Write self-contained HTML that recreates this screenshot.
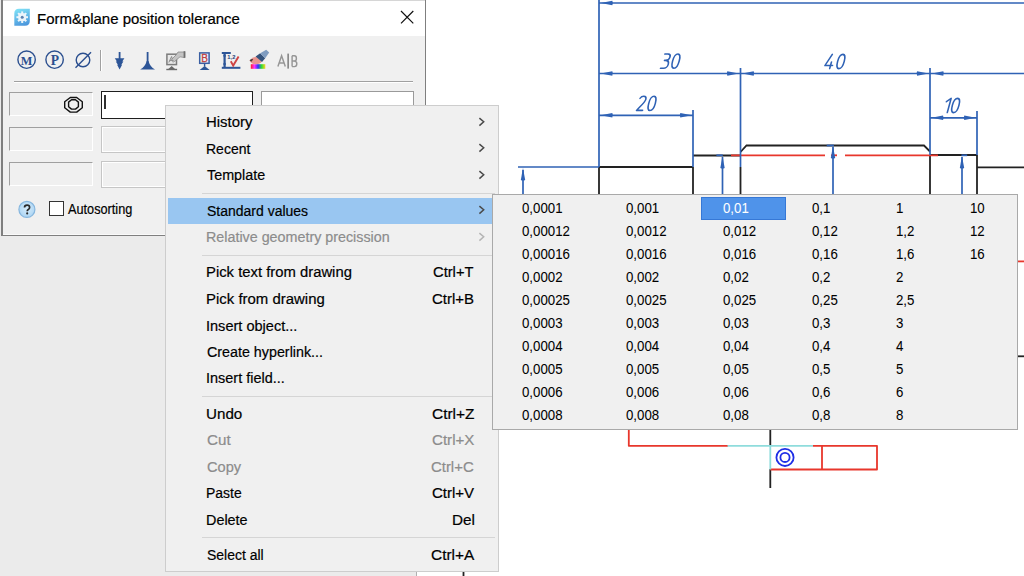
<!DOCTYPE html>
<html><head><meta charset="utf-8">
<style>
html,body{margin:0;padding:0;}
body{width:1024px;height:576px;position:relative;overflow:hidden;background:#fff;font-family:"Liberation Sans",sans-serif;}
.a{position:absolute;}
.t{position:absolute;white-space:nowrap;line-height:1;-webkit-text-stroke:0.2px currentColor;}
</style></head>
<body>
<div class="a" style="left:0;top:0;width:417px;height:576px;background:#ebebeb"></div>
<div class="a" style="left:416px;top:0;width:1px;height:576px;background:#b0b0b0"></div>
<svg class="a" style="left:0;top:0" width="1024" height="576" viewBox="0 0 1024 576">
<g stroke="#222" stroke-width="1.8" fill="none">
<path d="M599 167 H693"/>
<path d="M599 167 V194"/>
<path d="M693 167 V194"/>
<path d="M693 155.5 H740"/>
<path d="M740.5 167 V194"/>
<path d="M740.5 152 L746.5 145.5 H924 L930 151.5"/>
<path d="M930 155 H977"/>
<path d="M930 155 V194"/>
<path d="M977 155 V194"/>
<path d="M977 167.3 H1024"/>
<path d="M1018 356.3 H1024"/>
<path d="M770.3 430 V446"/>
<path d="M770.3 469 V488"/>
<path d="M463.5 500 V576"/>
</g>
<g stroke="#e8372c" stroke-width="1.8" fill="none" stroke-linejoin="round">
<path d="M731 155.3 H825"/>
<path d="M831 155.3 H837"/>
<path d="M845 155.3 H938"/>
<path d="M1018 261.4 H1024"/>
<path d="M628.8 430 V445.8 H728"/>
<path d="M813 445.8 H877 V469.5 H770.3"/>
<path d="M822 445.8 V469.5"/>
</g>
<g stroke="#8fdcdc" stroke-width="1.8" fill="none"><path d="M727.5 445.8 H813"/><path d="M770.3 445.8 V469.5"/></g>
<g stroke="#1f2fe6" stroke-width="1.8" fill="none"><circle cx="785" cy="457.4" r="8.6"/><circle cx="785" cy="457.4" r="4.6"/></g>
<g stroke="#2f62b5" stroke-width="1.8"><path d="M716.4 155.3 H722.8"/><path d="M826.7 145.5 H833.9"/><path d="M961.4 155.3 H967.2"/></g>
<g stroke="#2f62b5" stroke-width="1.7" fill="none">
<line x1="599" y1="0" x2="599" y2="167"/>
<line x1="599" y1="3" x2="1024" y2="3"/>
<line x1="599" y1="73.5" x2="1024" y2="73.5"/>
<line x1="740.5" y1="68" x2="740.5" y2="167"/>
<line x1="930" y1="68" x2="930" y2="155"/>
<line x1="599" y1="115.3" x2="693" y2="115.3"/>
<line x1="693" y1="110" x2="693" y2="167"/>
<line x1="930" y1="117.8" x2="977" y2="117.8"/>
<line x1="977" y1="111" x2="977" y2="155"/>
<line x1="518" y1="167" x2="599" y2="167"/>
<line x1="523" y1="170" x2="523" y2="194"/>
<line x1="722.5" y1="157" x2="722.5" y2="194"/>
<line x1="833" y1="147" x2="833" y2="194"/>
<line x1="962" y1="157" x2="962" y2="194"/>
</g>
<g fill="#2f62b5">
<path d="M600.8 3 L612.3 0.7999999999999998 Q613.4 3 612.3 5.2 Z"/>
<path d="M600.8 73.5 L612.3 71.3 Q613.4 73.5 612.3 75.7 Z"/>
<path d="M738.8 73.5 L727.3 71.3 Q726.1999999999999 73.5 727.3 75.7 Z"/>
<path d="M742.2 73.5 L753.7 71.3 Q754.8000000000001 73.5 753.7 75.7 Z"/>
<path d="M928.6 73.5 L917.1 71.3 Q916.0 73.5 917.1 75.7 Z"/>
<path d="M931.8 73.5 L943.3 71.3 Q944.4 73.5 943.3 75.7 Z"/>
<path d="M600.8 115.3 L612.3 113.1 Q613.4 115.3 612.3 117.5 Z"/>
<path d="M691.8 115.3 L680.3 113.1 Q679.1999999999999 115.3 680.3 117.5 Z"/>
<path d="M931.5 117.8 L943.0 115.6 Q944.1 117.8 943.0 120.0 Z"/>
<path d="M975.8 117.8 L964.3 115.6 Q963.1999999999999 117.8 964.3 120.0 Z"/>
<path d="M523 168 L520.8 180 Q523 181.1 525.2 180 Z"/>
<path d="M722.5 156 L720.3 168 Q722.5 169.1 724.7 168 Z"/>
<path d="M833 146 L830.8 158 Q833 159.1 835.2 158 Z"/>
<path d="M962 156 L959.8 168 Q962 169.1 964.2 168 Z"/>
</g>
<g stroke="#2f62b5" stroke-width="1.6" fill="none" stroke-linecap="round" stroke-linejoin="round">
<path transform="translate(660.20 68.60) skewX(-15)" d="M0.7,-14.6 H3.9 C5.7,-14.6 6.7,-13.4 6.7,-11.6 C6.7,-9.6 5.3,-8.2 3.1,-8.2 H2.1 M3.1,-8.2 C5.6,-8.2 6.9,-6.6 6.9,-4.4 C6.9,-1.8 5.3,-0.4 3.3,-0.4 H0.2"/><path transform="translate(670.30 68.60) skewX(-15)" d="M3.6,-14.6 C5.9,-14.6 6.9,-12 6.9,-7.5 C6.9,-3 5.9,-0.4 3.6,-0.4 C1.3,-0.4 0.3,-3 0.3,-7.5 C0.3,-12 1.3,-14.6 3.6,-14.6 Z"/>
<path transform="translate(823.60 69.00) skewX(-15)" d="M4.8,-14.6 L0.4,-3.5 H8 M6,-7 V-0.4"/><path transform="translate(835.30 69.00) skewX(-15)" d="M3.6,-14.6 C5.9,-14.6 6.9,-12 6.9,-7.5 C6.9,-3 5.9,-0.4 3.6,-0.4 C1.3,-0.4 0.3,-3 0.3,-7.5 C0.3,-12 1.3,-14.6 3.6,-14.6 Z"/>
<path transform="translate(636.00 110.90) skewX(-15)" d="M0.7,-12.6 C1.3,-14 2.4,-14.6 3.7,-14.6 C5.5,-14.6 6.7,-13.4 6.7,-11.5 C6.7,-9.2 5.2,-7.5 0.4,-0.5 H6.4"/><path transform="translate(646.40 110.90) skewX(-15)" d="M3.6,-14.6 C5.9,-14.6 6.9,-12 6.9,-7.5 C6.9,-3 5.9,-0.4 3.6,-0.4 C1.3,-0.4 0.3,-3 0.3,-7.5 C0.3,-12 1.3,-14.6 3.6,-14.6 Z"/>
<path transform="translate(942.80 113.00) skewX(-15)" d="M0.6,-11.3 L4.4,-14.6 V-0.4"/><path transform="translate(950.00 113.00) skewX(-15)" d="M3.6,-14.6 C5.9,-14.6 6.9,-12 6.9,-7.5 C6.9,-3 5.9,-0.4 3.6,-0.4 C1.3,-0.4 0.3,-3 0.3,-7.5 C0.3,-12 1.3,-14.6 3.6,-14.6 Z"/>
</g>
</svg>
<div class="a" style="left:1px;top:0;width:425px;height:236px;background:#7f7f7f"></div>
<div class="a" style="left:3px;top:0;width:422px;height:1px;background:#d6d6d6"></div>
<div class="a" style="left:3px;top:1px;width:422px;height:35px;background:#fff"></div>
<div class="a" style="left:3px;top:36px;width:422px;height:198px;background:#f0f0f0"></div>
<div class="a" style="left:3px;top:234px;width:422px;height:1px;background:#fafafa"></div>
<div class="t" style="left:37.20px;top:10.53px;font-size:15.2px;color:#000;transform:scaleX(0.985);transform-origin:0 0;">Form&amp;plane position tolerance</div>
<div class="a" style="left:14px;top:81px;width:399px;height:1px;background:#a0a0a0"></div>
<div class="a" style="left:14px;top:82px;width:399px;height:1px;background:#fff"></div>
<div class="a" style="left:100px;top:50px;width:1px;height:21px;background:#a0a0a0"></div>
<div class="a" style="left:101px;top:50px;width:1px;height:21px;background:#fff"></div>
<div class="a" style="left:9px;top:92px;width:82px;height:22px;background:#f0f0f0;border-top:1px solid #a0a0a0;border-left:1px solid #a0a0a0;border-bottom:1px solid #fff;border-right:1px solid #fff"></div>
<div class="a" style="left:9px;top:127px;width:82px;height:22px;background:#f0f0f0;border-top:1px solid #a0a0a0;border-left:1px solid #a0a0a0;border-bottom:1px solid #fff;border-right:1px solid #fff"></div>
<div class="a" style="left:9px;top:162px;width:82px;height:22px;background:#f0f0f0;border-top:1px solid #a0a0a0;border-left:1px solid #a0a0a0;border-bottom:1px solid #fff;border-right:1px solid #fff"></div>
<div class="a" style="left:101px;top:126px;width:198px;height:25px;background:#f0f0f0;border:1px solid #c6c6c6;box-shadow:inset 0 0 0 1px #fff"></div>
<div class="a" style="left:101px;top:161px;width:198px;height:25px;background:#f0f0f0;border:1px solid #c6c6c6;box-shadow:inset 0 0 0 1px #fff"></div>
<div class="a" style="left:261px;top:126px;width:151px;height:25px;background:#f0f0f0;border:1px solid #c6c6c6;box-shadow:inset 0 0 0 1px #fff"></div>
<div class="a" style="left:261px;top:161px;width:151px;height:25px;background:#f0f0f0;border:1px solid #c6c6c6;box-shadow:inset 0 0 0 1px #fff"></div>
<div class="a" style="left:101px;top:91px;width:149.6px;height:25.6px;background:#fff;border:1.2px solid #1e1e1e"></div>
<div class="a" style="left:104.2px;top:94.6px;width:1.5px;height:14px;background:#303030"></div>
<div class="a" style="left:261px;top:91px;width:151px;height:25px;background:#fff;border:1px solid #9a9a9a"></div>
<svg class="a" style="left:0;top:0" width="430" height="240" viewBox="0 0 430 240">
  <defs>
    <linearGradient id="ig" x1="0.3" y1="0" x2="0.6" y2="1">
      <stop offset="0" stop-color="#7ee0f6"/>
      <stop offset="1" stop-color="#4b96dc"/>
    </linearGradient>
    <radialGradient id="hg" cx="0.5" cy="0.45" r="0.6">
      <stop offset="0" stop-color="#d6ecfb"/>
      <stop offset="1" stop-color="#a9d3f3"/>
    </radialGradient>
  </defs>
  <!-- title icon -->
  <path d="M14.3 25.8 V13.5 Q14.3 8.7 19 8.7 H29.8 V21 Q29.8 25.8 25 25.8 Z" fill="url(#ig)"/>
  <g transform="translate(22.2,17.2)" fill="#f4f8fc" opacity="0.95">
    <circle r="4.1"/>
    <g>
      <rect x="-1" y="-5.8" width="2" height="2.4"/>
      <rect x="-1" y="3.4" width="2" height="2.4"/>
      <rect x="-5.8" y="-1" width="2.4" height="2"/>
      <rect x="3.4" y="-1" width="2.4" height="2"/>
    </g>
    <g transform="rotate(45)">
      <rect x="-1" y="-5.8" width="2" height="2.4"/>
      <rect x="-1" y="3.4" width="2" height="2.4"/>
      <rect x="-5.8" y="-1" width="2.4" height="2"/>
      <rect x="3.4" y="-1" width="2.4" height="2"/>
    </g>
    <circle r="1.5" fill="#5b7fae"/>
  </g>
  <!-- close X -->
  <path d="M401 11 L413.3 23.3 M413.3 11 L401 23.3" stroke="#111" stroke-width="1.2"/>
  <!-- toolbar icons -->
  <g stroke="#2b4f8f" fill="none" stroke-width="1.4">
    <circle cx="26.6" cy="59.7" r="8.7"/>
    <circle cx="54.6" cy="59.7" r="8.7"/>
    <circle cx="83" cy="60" r="6.8"/>
    <line x1="75.5" y1="67.8" x2="91" y2="52.3"/>
  </g>
  <text x="26.6" y="64.9" font-family="Liberation Serif" font-weight="bold" font-size="13.4" fill="#2b4f8f" text-anchor="middle" transform="translate(26.6 0) scale(0.92 1) translate(-26.6 0)">M</text>
  <text x="55" y="64.9" font-family="Liberation Serif" font-weight="bold" font-size="13.6" fill="#2b4f8f" text-anchor="middle">P</text>
  <!-- down arrow with flat tail -->
  <g fill="#2d5597">
    <rect x="118.7" y="52" width="1.8" height="7"/>
    <path d="M114.8 58.2 H124.4 L122.3 61.6 H123.4 L121.3 64.8 H122.1 L119.6 69.4 L117.1 64.8 H117.9 L115.8 61.6 H116.9 Z"/>
  </g>
  <!-- perpendicular -->
  <g fill="#2d5597">
    <rect x="146.7" y="52" width="1.8" height="10"/>
    <path d="M146.7 61 H148.5 Q150 66.8 155 69.4 H140.2 Q145.2 66.8 146.7 61 Z"/>
  </g>
  <!-- gray monitor -->
  <g>
    <rect x="166.9" y="54.2" width="9.6" height="10.4" fill="#e8e8e8" stroke="#7c7c7c" stroke-width="1.5"/>
    <path d="M168.8 62.5 L171.6 56.5 L173.2 62.5 M169.8 60.6 H172.6" fill="none" stroke="#8a8a8a" stroke-width="1"/>
    <path d="M171.5 59.5 L176.5 54.5 L178 52 H184.6 V57.6 L180 56.8 L174.5 61.5 Z" fill="#c4c4c4" stroke="#8a8a8a" stroke-width="0.8"/>
    <rect x="183.6" y="51.2" width="1.8" height="6.6" fill="#6e6e6e"/>
    <path d="M167.5 69.8 L171.7 66 L175.9 69.8 Z" fill="#6a6a6a"/>
    <rect x="166.3" y="68.8" width="10.8" height="1.4" fill="#6a6a6a"/>
  </g>
  <!-- B monitor -->
  <g>
    <rect x="199.7" y="52.9" width="9.4" height="10.4" fill="#eef5fb" stroke="#3a5fa3" stroke-width="1.5"/>
    <text x="204.6" y="61.8" font-family="Liberation Sans" font-size="10" fill="#c04040" text-anchor="middle" stroke="#c04040" stroke-width="0.3">B</text>
    <rect x="203.9" y="63.5" width="1.4" height="3" fill="#2d5597"/>
    <path d="M199.6 69.9 L204.6 66 L209.6 69.9 Z" fill="#2d5597"/>
  </g>
  <!-- I 1,2 V -->
  <g>
    <rect x="221.8" y="52" width="9" height="2" fill="#2d5597"/>
    <rect x="223.5" y="52" width="2.2" height="16" fill="#2d5597"/>
    <rect x="221.8" y="66.8" width="18.6" height="2" fill="#2d5597"/>
    <circle cx="224.6" cy="55.8" r="1.3" fill="#2d5597"/>
    <circle cx="224.6" cy="64" r="1.3" fill="#2d5597"/>
    <text x="227.3" y="59.2" font-family="Liberation Sans" font-weight="bold" font-size="5.8" fill="#1f3f78">1,2</text>
    <path d="M230.8 61.3 L233.2 65.6 L238.6 56.6" fill="none" stroke="#cf4444" stroke-width="1.9"/>
  </g>
  <!-- brush -->
  <g>
    <defs>
      <linearGradient id="rb" x1="0" y1="0" x2="1" y2="0">
        <stop offset="0" stop-color="#ff2020"/>
        <stop offset="0.25" stop-color="#ff30ff"/>
        <stop offset="0.5" stop-color="#3030ff"/>
        <stop offset="0.75" stop-color="#30e030"/>
        <stop offset="1" stop-color="#ffd020"/>
      </linearGradient>
    </defs>
    <rect x="250.8" y="64.2" width="14.5" height="4.6" fill="url(#rb)"/>
    <path d="M249.6 60.4 Q252 57.2 256.2 56.8 L261.8 61.6 Q260.2 64.6 255 64.3 Q250.8 63.6 249.6 60.4 Z" fill="#ea958f"/>
    <path d="M249.6 60.4 Q250.8 58.8 253.2 59 L251.6 61.8 Z" fill="#4a3c3c"/>
    <path d="M255.6 56.4 L260.2 53.2 L265.2 58.2 L262 62 Z" fill="#34537c"/>
    <path d="M260.2 53.2 L266.2 49.8 L269.2 52.4 L265.2 58.2 Z" fill="#7f9cc0"/>
  </g>
  <!-- A|B gray -->
  <g fill="none" stroke="#969696" stroke-width="1.45">
    <path d="M277.9 66.6 L281.6 55.8 L285.3 66.6 M279.3 62.9 H283.9"/>
    <path d="M292.1 55.8 V66.6 M292.1 55.8 H294.4 Q296.4 55.8 296.4 58.4 Q296.4 61 294.2 61 H292.1 M294.2 61 Q296.8 61 296.8 63.8 Q296.8 66.6 294.4 66.6 H292.1"/>
  </g>
  <rect x="287.3" y="53.6" width="1.7" height="15" fill="#8a8a8a"/>
  <!-- concentricity symbol in cell -->
  <g fill="none" stroke="#111" stroke-width="1.4" stroke-linejoin="round">
    <path d="M70.30 97.50 L76.70 97.50 L82.30 101.80 L82.30 107.80 L76.70 112.10 L70.30 112.10 L64.70 107.80 L64.70 101.80 Z"/>
    <path d="M71.50 99.70 L75.50 99.70 L78.40 102.10 L78.40 106.70 L75.50 109.10 L71.50 109.10 L68.60 106.70 L68.60 102.10 Z"/>
  </g>
  <!-- help icon -->
  <circle cx="26.9" cy="209.4" r="8" fill="url(#hg)" stroke="#86b6de" stroke-width="1.2"/>
  <path d="M24.5 207.6 Q24.5 205.2 27.1 205.2 Q29.6 205.2 29.6 207.4 Q29.6 208.7 28.3 209.4 Q27.2 210 27.2 211.3" fill="none" stroke="#2a2a2a" stroke-width="1.7"/><circle cx="27.2" cy="213.4" r="1.05" fill="#2a2a2a"/>
</svg>

<div class="a" style="left:49px;top:201px;width:12.5px;height:12.5px;background:#fff;border:1.3px solid #333"></div>
<div class="t" style="left:67.50px;top:200.98px;font-size:15.5px;color:#000;transform:scaleX(0.82);transform-origin:0 0;letter-spacing:0px;">Autosorting</div>
<div class="a" style="left:165px;top:105px;width:332px;height:465px;background:#f0f0f0;border:1px solid #cdcdcd"></div>
<div class="a" style="left:168px;top:198px;width:324px;height:25.5px;background:#99c6f1"></div>
<div class="t" style="left:206.39px;top:114.16px;font-size:15.4px;color:#000;transform:scaleX(0.97);transform-origin:0 0;">History</div>
<svg class="a" style="left:477px;top:116.0px" width="10" height="12"><path d="M2.4 2.1 L6.7 5.8 L2.4 9.6" fill="none" stroke="#4a4a4a" stroke-width="1.5"/></svg>
<div class="t" style="left:206.46px;top:140.56px;font-size:15.4px;color:#000;transform:scaleX(0.9093);transform-origin:0 0;">Recent</div>
<svg class="a" style="left:477px;top:142.4px" width="10" height="12"><path d="M2.4 2.1 L6.7 5.8 L2.4 9.6" fill="none" stroke="#4a4a4a" stroke-width="1.5"/></svg>
<div class="t" style="left:207.27px;top:166.96px;font-size:15.4px;color:#000;transform:scaleX(0.9325);transform-origin:0 0;">Template</div>
<svg class="a" style="left:477px;top:168.8px" width="10" height="12"><path d="M2.4 2.1 L6.7 5.8 L2.4 9.6" fill="none" stroke="#4a4a4a" stroke-width="1.5"/></svg>
<div class="t" style="left:206.96px;top:202.56px;font-size:15.4px;color:#000;transform:scaleX(0.9087);transform-origin:0 0;">Standard values</div>
<svg class="a" style="left:477px;top:204.4px" width="10" height="12"><path d="M2.4 2.1 L6.7 5.8 L2.4 9.6" fill="none" stroke="#4a4a4a" stroke-width="1.5"/></svg>
<div class="t" style="left:206.44px;top:228.96px;font-size:15.4px;color:#8c8c8c;transform:scaleX(0.9296);transform-origin:0 0;">Relative geometry precission</div>
<svg class="a" style="left:477px;top:230.8px" width="10" height="12"><path d="M2.4 2.1 L6.7 5.8 L2.4 9.6" fill="none" stroke="#b4b4b4" stroke-width="1.5"/></svg>
<div class="t" style="left:206.40px;top:264.16px;font-size:15.4px;color:#000;transform:scaleX(0.9638);transform-origin:0 0;">Pick text from drawing</div>
<div class="t" style="left:433.13px;top:264.16px;font-size:15.4px;color:#000;transform:scaleX(0.9563);transform-origin:0 0;">Ctrl+T</div>
<div class="t" style="left:206.39px;top:290.56px;font-size:15.4px;color:#000;transform:scaleX(0.9709);transform-origin:0 0;">Pick from drawing</div>
<div class="t" style="left:431.72px;top:290.56px;font-size:15.4px;color:#000;transform:scaleX(0.9736);transform-origin:0 0;">Ctrl+B</div>
<div class="t" style="left:206.28px;top:317.56px;font-size:15.4px;color:#000;transform:scaleX(0.9446);transform-origin:0 0;">Insert object...</div>
<div class="t" style="left:206.86px;top:343.96px;font-size:15.4px;color:#000;transform:scaleX(0.9287);transform-origin:0 0;">Create hyperlink...</div>
<div class="t" style="left:206.29px;top:370.26px;font-size:15.4px;color:#000;transform:scaleX(0.9389);transform-origin:0 0;">Insert field...</div>
<div class="t" style="left:206.42px;top:405.76px;font-size:15.4px;color:#000;transform:scaleX(0.9871);transform-origin:0 0;">Undo</div>
<div class="t" style="left:431.60px;top:405.76px;font-size:15.4px;color:#000;transform:scaleX(1.0049);transform-origin:0 0;">Ctrl+Z</div>
<div class="t" style="left:206.81px;top:432.36px;font-size:15.4px;color:#8c8c8c;transform:scaleX(0.9848);transform-origin:0 0;">Cut</div>
<div class="t" style="left:431.62px;top:432.36px;font-size:15.4px;color:#8c8c8c;transform:scaleX(0.981);transform-origin:0 0;">Ctrl+X</div>
<div class="t" style="left:206.84px;top:458.56px;font-size:15.4px;color:#8c8c8c;transform:scaleX(0.9487);transform-origin:0 0;">Copy</div>
<div class="t" style="left:431.03px;top:458.56px;font-size:15.4px;color:#8c8c8c;transform:scaleX(0.9683);transform-origin:0 0;">Ctrl+C</div>
<div class="t" style="left:206.47px;top:485.46px;font-size:15.4px;color:#000;transform:scaleX(0.9052);transform-origin:0 0;">Paste</div>
<div class="t" style="left:431.62px;top:485.46px;font-size:15.4px;color:#000;transform:scaleX(0.9752);transform-origin:0 0;">Ctrl+V</div>
<div class="t" style="left:206.43px;top:511.71px;font-size:15.4px;color:#000;transform:scaleX(0.9343);transform-origin:0 0;">Delete</div>
<div class="t" style="left:451.76px;top:511.71px;font-size:15.4px;color:#000;transform:scaleX(0.9928);transform-origin:0 0;">Del</div>
<div class="t" style="left:206.97px;top:546.96px;font-size:15.4px;color:#000;transform:scaleX(0.907);transform-origin:0 0;">Select all</div>
<div class="t" style="left:430.90px;top:546.96px;font-size:15.4px;color:#000;transform:scaleX(1.0024);transform-origin:0 0;">Ctrl+A</div>
<div class="a" style="left:202px;top:193px;width:293px;height:1px;background:#d5d5d5"></div>
<div class="a" style="left:202px;top:255px;width:293px;height:1px;background:#d5d5d5"></div>
<div class="a" style="left:202px;top:396px;width:293px;height:1px;background:#d5d5d5"></div>
<div class="a" style="left:202px;top:537px;width:293px;height:1px;background:#d5d5d5"></div>
<div class="a" style="left:492px;top:194px;width:523.5px;height:234px;background:#f0f0f0;border:1.3px solid #a9a9a9"></div>
<div class="a" style="left:700.5px;top:197.3px;width:83px;height:21px;background:#4f93ea;border:1px solid #3678d6"></div>
<div class="t" style="left:522.00px;top:200.38px;font-size:15.5px;color:#000;transform:scaleX(0.855);transform-origin:0 0;-webkit-text-stroke:0.05px currentColor;">0,0001</div>
<div class="t" style="left:522.00px;top:223.34px;font-size:15.5px;color:#000;transform:scaleX(0.855);transform-origin:0 0;-webkit-text-stroke:0.05px currentColor;">0,00012</div>
<div class="t" style="left:522.00px;top:246.30px;font-size:15.5px;color:#000;transform:scaleX(0.855);transform-origin:0 0;-webkit-text-stroke:0.05px currentColor;">0,00016</div>
<div class="t" style="left:522.00px;top:269.26px;font-size:15.5px;color:#000;transform:scaleX(0.855);transform-origin:0 0;-webkit-text-stroke:0.05px currentColor;">0,0002</div>
<div class="t" style="left:522.00px;top:292.22px;font-size:15.5px;color:#000;transform:scaleX(0.855);transform-origin:0 0;-webkit-text-stroke:0.05px currentColor;">0,00025</div>
<div class="t" style="left:522.00px;top:315.18px;font-size:15.5px;color:#000;transform:scaleX(0.855);transform-origin:0 0;-webkit-text-stroke:0.05px currentColor;">0,0003</div>
<div class="t" style="left:522.00px;top:338.14px;font-size:15.5px;color:#000;transform:scaleX(0.855);transform-origin:0 0;-webkit-text-stroke:0.05px currentColor;">0,0004</div>
<div class="t" style="left:522.00px;top:361.10px;font-size:15.5px;color:#000;transform:scaleX(0.855);transform-origin:0 0;-webkit-text-stroke:0.05px currentColor;">0,0005</div>
<div class="t" style="left:522.00px;top:384.06px;font-size:15.5px;color:#000;transform:scaleX(0.855);transform-origin:0 0;-webkit-text-stroke:0.05px currentColor;">0,0006</div>
<div class="t" style="left:522.00px;top:407.02px;font-size:15.5px;color:#000;transform:scaleX(0.855);transform-origin:0 0;-webkit-text-stroke:0.05px currentColor;">0,0008</div>
<div class="t" style="left:626.00px;top:200.38px;font-size:15.5px;color:#000;transform:scaleX(0.855);transform-origin:0 0;-webkit-text-stroke:0.05px currentColor;">0,001</div>
<div class="t" style="left:626.00px;top:223.34px;font-size:15.5px;color:#000;transform:scaleX(0.855);transform-origin:0 0;-webkit-text-stroke:0.05px currentColor;">0,0012</div>
<div class="t" style="left:626.00px;top:246.30px;font-size:15.5px;color:#000;transform:scaleX(0.855);transform-origin:0 0;-webkit-text-stroke:0.05px currentColor;">0,0016</div>
<div class="t" style="left:626.00px;top:269.26px;font-size:15.5px;color:#000;transform:scaleX(0.855);transform-origin:0 0;-webkit-text-stroke:0.05px currentColor;">0,002</div>
<div class="t" style="left:626.00px;top:292.22px;font-size:15.5px;color:#000;transform:scaleX(0.855);transform-origin:0 0;-webkit-text-stroke:0.05px currentColor;">0,0025</div>
<div class="t" style="left:626.00px;top:315.18px;font-size:15.5px;color:#000;transform:scaleX(0.855);transform-origin:0 0;-webkit-text-stroke:0.05px currentColor;">0,003</div>
<div class="t" style="left:626.00px;top:338.14px;font-size:15.5px;color:#000;transform:scaleX(0.855);transform-origin:0 0;-webkit-text-stroke:0.05px currentColor;">0,004</div>
<div class="t" style="left:626.00px;top:361.10px;font-size:15.5px;color:#000;transform:scaleX(0.855);transform-origin:0 0;-webkit-text-stroke:0.05px currentColor;">0,005</div>
<div class="t" style="left:626.00px;top:384.06px;font-size:15.5px;color:#000;transform:scaleX(0.855);transform-origin:0 0;-webkit-text-stroke:0.05px currentColor;">0,006</div>
<div class="t" style="left:626.00px;top:407.02px;font-size:15.5px;color:#000;transform:scaleX(0.855);transform-origin:0 0;-webkit-text-stroke:0.05px currentColor;">0,008</div>
<div class="t" style="left:723.00px;top:200.38px;font-size:15.5px;color:#fff;transform:scaleX(0.855);transform-origin:0 0;-webkit-text-stroke:0.05px currentColor;">0,01</div>
<div class="t" style="left:723.00px;top:223.34px;font-size:15.5px;color:#000;transform:scaleX(0.855);transform-origin:0 0;-webkit-text-stroke:0.05px currentColor;">0,012</div>
<div class="t" style="left:723.00px;top:246.30px;font-size:15.5px;color:#000;transform:scaleX(0.855);transform-origin:0 0;-webkit-text-stroke:0.05px currentColor;">0,016</div>
<div class="t" style="left:723.00px;top:269.26px;font-size:15.5px;color:#000;transform:scaleX(0.855);transform-origin:0 0;-webkit-text-stroke:0.05px currentColor;">0,02</div>
<div class="t" style="left:723.00px;top:292.22px;font-size:15.5px;color:#000;transform:scaleX(0.855);transform-origin:0 0;-webkit-text-stroke:0.05px currentColor;">0,025</div>
<div class="t" style="left:723.00px;top:315.18px;font-size:15.5px;color:#000;transform:scaleX(0.855);transform-origin:0 0;-webkit-text-stroke:0.05px currentColor;">0,03</div>
<div class="t" style="left:723.00px;top:338.14px;font-size:15.5px;color:#000;transform:scaleX(0.855);transform-origin:0 0;-webkit-text-stroke:0.05px currentColor;">0,04</div>
<div class="t" style="left:723.00px;top:361.10px;font-size:15.5px;color:#000;transform:scaleX(0.855);transform-origin:0 0;-webkit-text-stroke:0.05px currentColor;">0,05</div>
<div class="t" style="left:723.00px;top:384.06px;font-size:15.5px;color:#000;transform:scaleX(0.855);transform-origin:0 0;-webkit-text-stroke:0.05px currentColor;">0,06</div>
<div class="t" style="left:723.00px;top:407.02px;font-size:15.5px;color:#000;transform:scaleX(0.855);transform-origin:0 0;-webkit-text-stroke:0.05px currentColor;">0,08</div>
<div class="t" style="left:812.00px;top:200.38px;font-size:15.5px;color:#000;transform:scaleX(0.855);transform-origin:0 0;-webkit-text-stroke:0.05px currentColor;">0,1</div>
<div class="t" style="left:812.00px;top:223.34px;font-size:15.5px;color:#000;transform:scaleX(0.855);transform-origin:0 0;-webkit-text-stroke:0.05px currentColor;">0,12</div>
<div class="t" style="left:812.00px;top:246.30px;font-size:15.5px;color:#000;transform:scaleX(0.855);transform-origin:0 0;-webkit-text-stroke:0.05px currentColor;">0,16</div>
<div class="t" style="left:812.00px;top:269.26px;font-size:15.5px;color:#000;transform:scaleX(0.855);transform-origin:0 0;-webkit-text-stroke:0.05px currentColor;">0,2</div>
<div class="t" style="left:812.00px;top:292.22px;font-size:15.5px;color:#000;transform:scaleX(0.855);transform-origin:0 0;-webkit-text-stroke:0.05px currentColor;">0,25</div>
<div class="t" style="left:812.00px;top:315.18px;font-size:15.5px;color:#000;transform:scaleX(0.855);transform-origin:0 0;-webkit-text-stroke:0.05px currentColor;">0,3</div>
<div class="t" style="left:812.00px;top:338.14px;font-size:15.5px;color:#000;transform:scaleX(0.855);transform-origin:0 0;-webkit-text-stroke:0.05px currentColor;">0,4</div>
<div class="t" style="left:812.00px;top:361.10px;font-size:15.5px;color:#000;transform:scaleX(0.855);transform-origin:0 0;-webkit-text-stroke:0.05px currentColor;">0,5</div>
<div class="t" style="left:812.00px;top:384.06px;font-size:15.5px;color:#000;transform:scaleX(0.855);transform-origin:0 0;-webkit-text-stroke:0.05px currentColor;">0,6</div>
<div class="t" style="left:812.00px;top:407.02px;font-size:15.5px;color:#000;transform:scaleX(0.855);transform-origin:0 0;-webkit-text-stroke:0.05px currentColor;">0,8</div>
<div class="t" style="left:895.70px;top:200.38px;font-size:15.5px;color:#000;transform:scaleX(0.855);transform-origin:0 0;-webkit-text-stroke:0.05px currentColor;">1</div>
<div class="t" style="left:895.70px;top:223.34px;font-size:15.5px;color:#000;transform:scaleX(0.855);transform-origin:0 0;-webkit-text-stroke:0.05px currentColor;">1,2</div>
<div class="t" style="left:895.70px;top:246.30px;font-size:15.5px;color:#000;transform:scaleX(0.855);transform-origin:0 0;-webkit-text-stroke:0.05px currentColor;">1,6</div>
<div class="t" style="left:895.70px;top:269.26px;font-size:15.5px;color:#000;transform:scaleX(0.855);transform-origin:0 0;-webkit-text-stroke:0.05px currentColor;">2</div>
<div class="t" style="left:895.70px;top:292.22px;font-size:15.5px;color:#000;transform:scaleX(0.855);transform-origin:0 0;-webkit-text-stroke:0.05px currentColor;">2,5</div>
<div class="t" style="left:895.70px;top:315.18px;font-size:15.5px;color:#000;transform:scaleX(0.855);transform-origin:0 0;-webkit-text-stroke:0.05px currentColor;">3</div>
<div class="t" style="left:895.70px;top:338.14px;font-size:15.5px;color:#000;transform:scaleX(0.855);transform-origin:0 0;-webkit-text-stroke:0.05px currentColor;">4</div>
<div class="t" style="left:895.70px;top:361.10px;font-size:15.5px;color:#000;transform:scaleX(0.855);transform-origin:0 0;-webkit-text-stroke:0.05px currentColor;">5</div>
<div class="t" style="left:895.70px;top:384.06px;font-size:15.5px;color:#000;transform:scaleX(0.855);transform-origin:0 0;-webkit-text-stroke:0.05px currentColor;">6</div>
<div class="t" style="left:895.70px;top:407.02px;font-size:15.5px;color:#000;transform:scaleX(0.855);transform-origin:0 0;-webkit-text-stroke:0.05px currentColor;">8</div>
<div class="t" style="left:970.20px;top:200.38px;font-size:15.5px;color:#000;transform:scaleX(0.855);transform-origin:0 0;-webkit-text-stroke:0.05px currentColor;">10</div>
<div class="t" style="left:970.20px;top:223.34px;font-size:15.5px;color:#000;transform:scaleX(0.855);transform-origin:0 0;-webkit-text-stroke:0.05px currentColor;">12</div>
<div class="t" style="left:970.20px;top:246.30px;font-size:15.5px;color:#000;transform:scaleX(0.855);transform-origin:0 0;-webkit-text-stroke:0.05px currentColor;">16</div>
</body></html>
